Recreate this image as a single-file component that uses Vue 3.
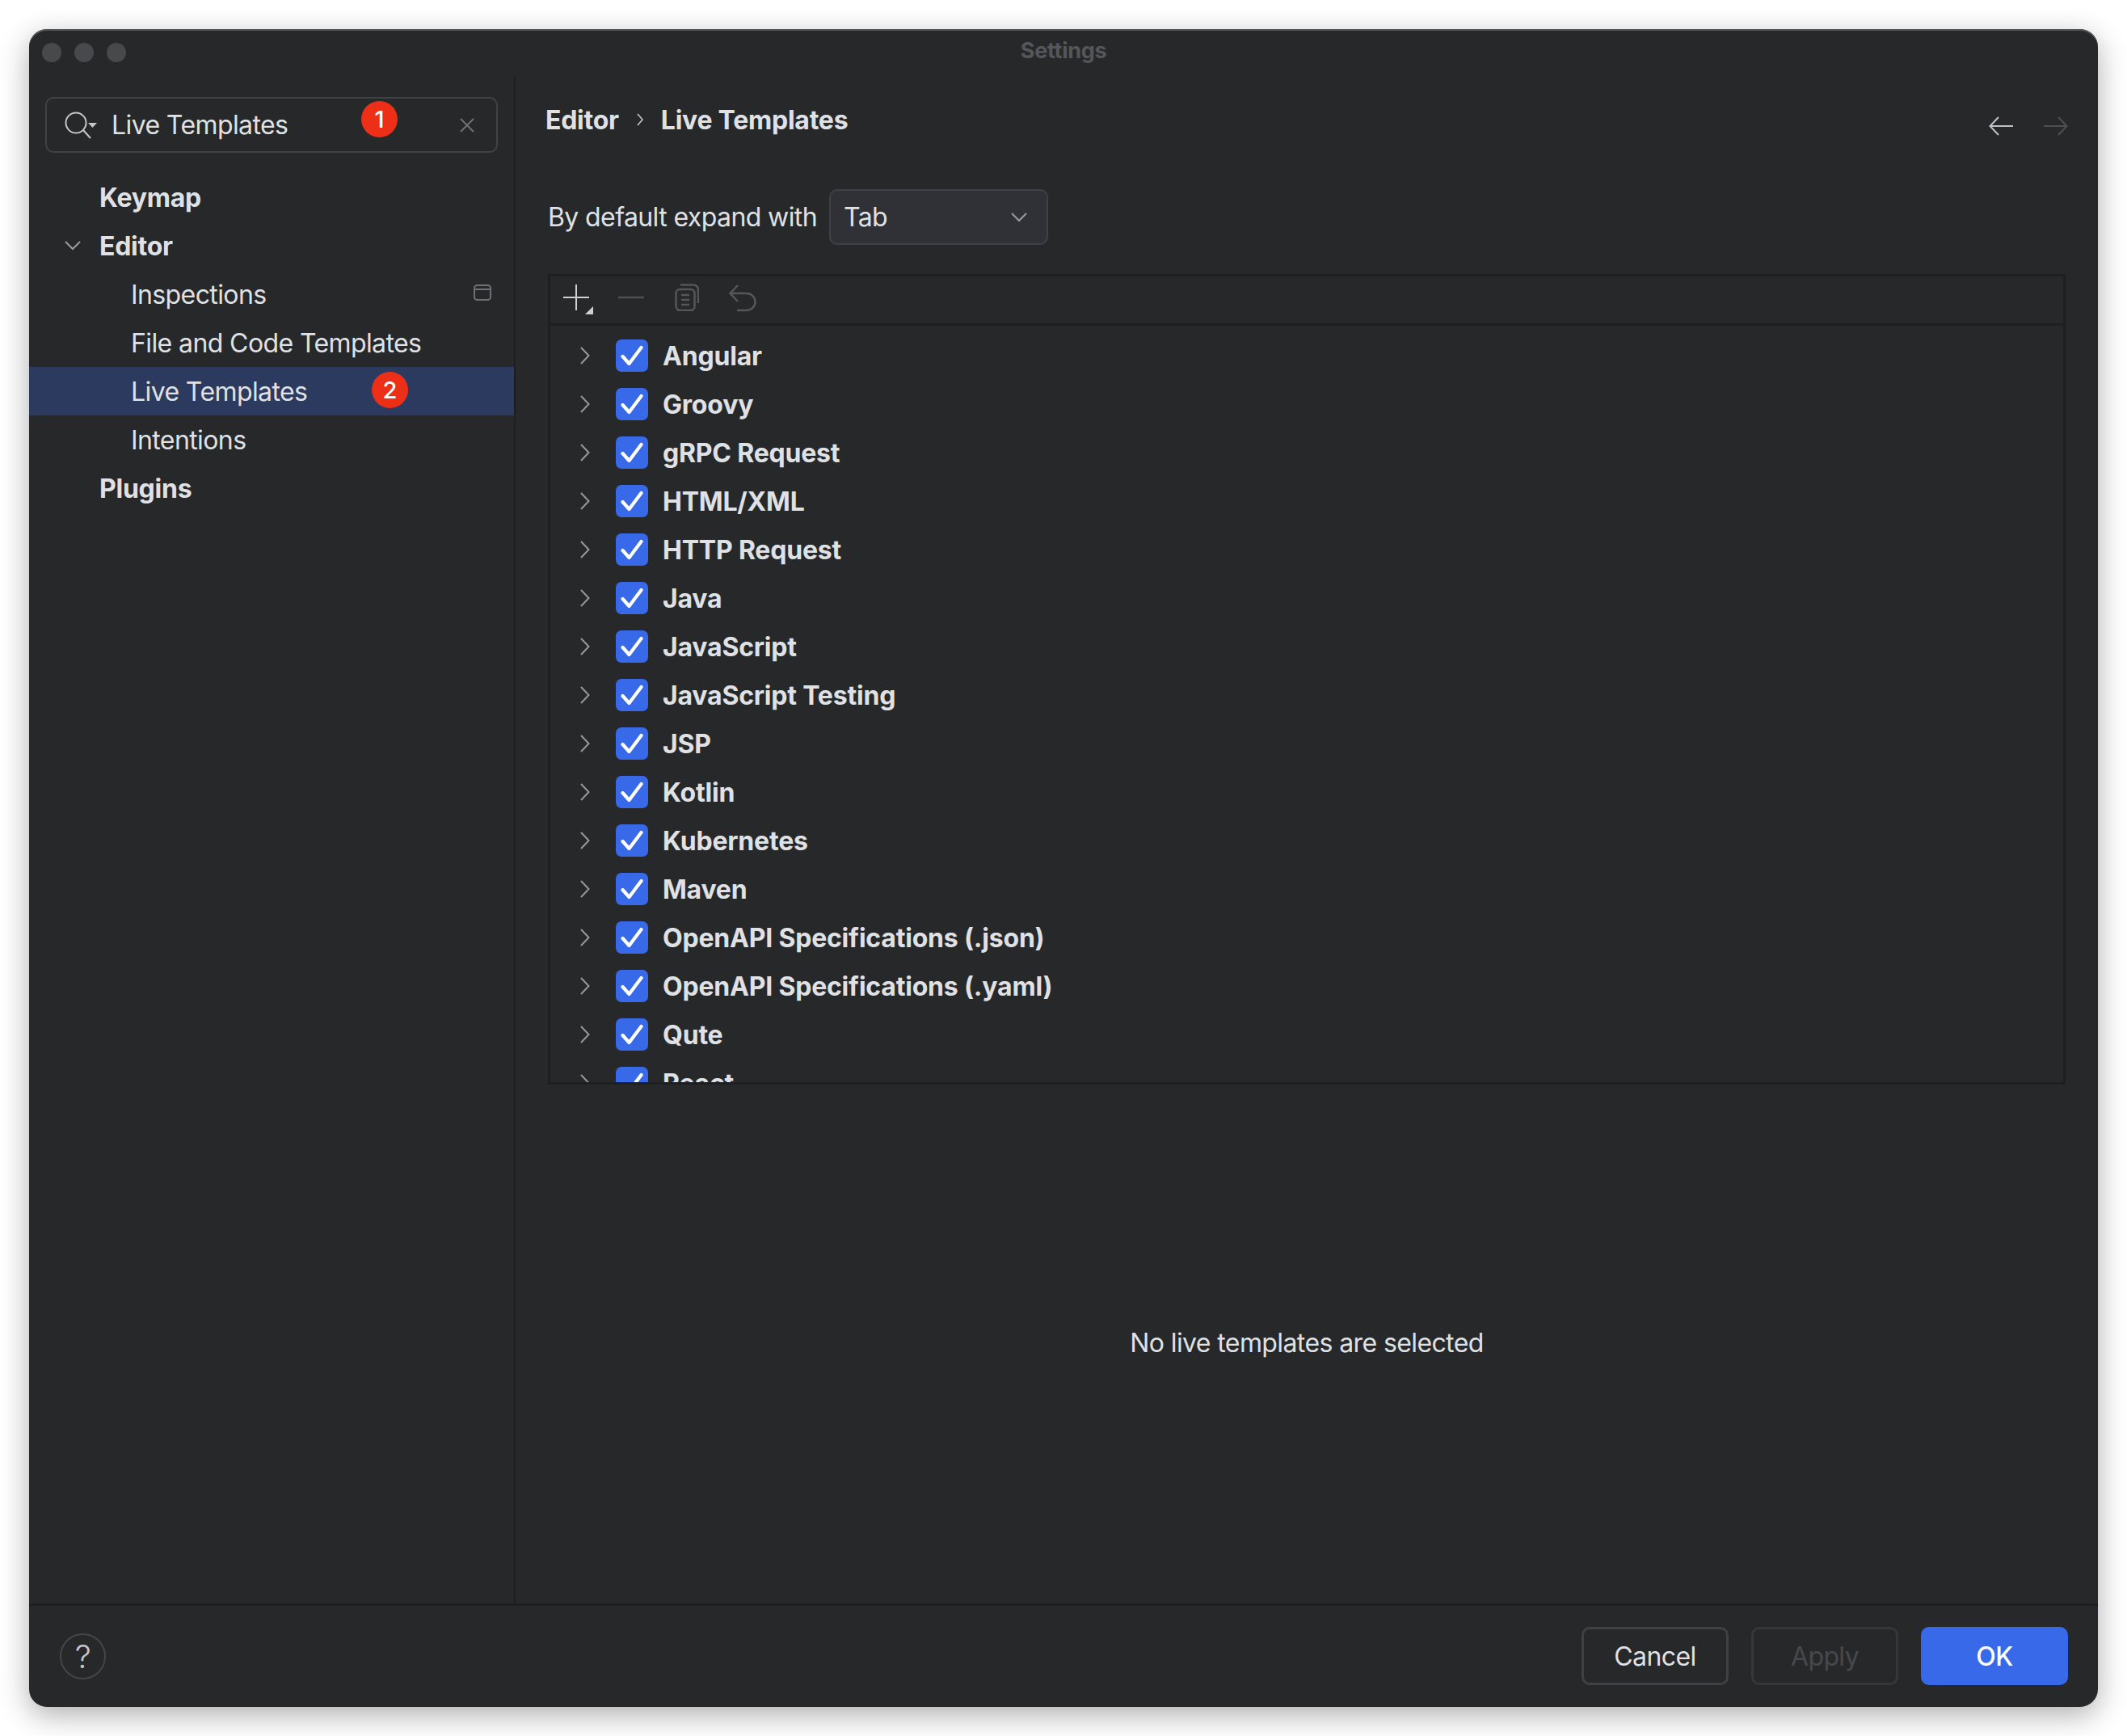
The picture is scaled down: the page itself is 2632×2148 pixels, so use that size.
<script setup>
const tree = [
  { label: 'Keymap', level: 'top' },
  { label: 'Editor', level: 'top', open: true },
  { label: 'Inspections', level: 'sub', stash: true },
  { label: 'File and Code Templates', level: 'sub' },
  { label: 'Live Templates', level: 'sub', selected: true, badge: '2' },
  { label: 'Intentions', level: 'sub' },
  { label: 'Plugins', level: 'top' }
]
const groups = ['Angular', 'Groovy', 'gRPC Request', 'HTML/XML', 'HTTP Request', 'Java', 'JavaScript', 'JavaScript Testing', 'JSP', 'Kotlin', 'Kubernetes', 'Maven', 'OpenAPI Specifications (.json)', 'OpenAPI Specifications (.yaml)', 'Qute', 'React']
</script>

<template>
  <div class="page">
    <div class="window">
      <header class="titlebar">
        <div class="lights"><i></i><i></i><i></i></div>
        <div class="title">Settings</div>
      </header>
      <div class="main">
        <aside class="sidebar">
          <div class="search">
            <svg class="search-icon" width="40" height="34" viewBox="0 0 40 34" fill="none">
              <circle cx="14" cy="14" r="12.500" stroke="#c4c6cc" stroke-width="2"/>
              <path d="M23 23l9 10" stroke="#c4c6cc" stroke-width="2"/>
              <path d="M29 14h11l-5.500 6z" fill="#c4c6cc"/>
            </svg>
            <span class="search-text">Live Templates</span>
            <span class="badge badge-search">1</span>
            <svg class="search-clear" width="18" height="18" viewBox="0 0 18 18" fill="none">
              <path d="M1 1l16 16M17 1L1 17" stroke="#6f7177" stroke-width="2"/>
            </svg>
          </div>
          <nav class="tree">
            <div v-for="n in tree" :key="n.label" class="node" :class="[n.level, { selected: n.selected }]">
              <svg v-if="n.open" class="node-chevron" width="20" height="12" viewBox="0 0 20 12" fill="none">
                <path d="M1 1l9 9 9-9" stroke="#9a9ca2" stroke-width="2"/>
              </svg>
              <span>{{ n.label }}</span>
              <span v-if="n.badge" class="badge badge-tree">{{ n.badge }}</span>
              <svg v-if="n.stash" class="node-stash" width="22" height="20" viewBox="0 0 22 20" fill="none">
                <rect x="1" y="1" width="20" height="18" rx="3.500" stroke="#6f7177" stroke-width="2"/>
                <path d="M1 6h20" stroke="#6f7177" stroke-width="2"/>
              </svg>
            </div>
          </nav>
        </aside>
        <section class="panel">
          <div class="head">
            <div class="crumbs">
              <span>Editor</span>
              <svg width="8" height="16" viewBox="0 0 8 16" fill="none"><path d="M1 1l6 7-6 7" stroke="#c4c6cc" stroke-width="1.600"/></svg>
              <span>Live Templates</span>
            </div>
            <div class="nav">
              <svg width="30" height="24" viewBox="0 0 30 24" fill="none"><path d="M30 12H2M12 1L1.500 12 12 23" stroke="#bfc1c7" stroke-width="2"/></svg>
              <svg width="30" height="24" viewBox="0 0 30 24" fill="none"><path d="M0 12h28M18 1l10.500 11L18 23" stroke="#4e4f53" stroke-width="2"/></svg>
            </div>
          </div>
          <div class="expand">
            <span>By default expand with</span>
            <div class="combo">
              <span>Tab</span>
              <svg width="20" height="12" viewBox="0 0 20 12" fill="none"><path d="M1 1l9 9 9-9" stroke="#9a9ca2" stroke-width="2"/></svg>
            </div>
          </div>
          <div class="table">
            <div class="toolbar">
              <svg width="38" height="38" viewBox="0 0 38 38" fill="none">
                <path d="M16 0v32M0 16h32" stroke="#ced0d6" stroke-width="2"/>
                <path d="M37 27v10H27z" fill="#ced0d6"/>
              </svg>
              <svg width="32" height="32" viewBox="0 0 32 32" fill="none"><path d="M0 16h32" stroke="#4e4f53" stroke-width="2.500"/></svg>
              <svg width="30" height="34" viewBox="0 0 30 34" fill="none">
                <rect x="1.500" y="7" width="23" height="26" rx="5" stroke="#55565a" stroke-width="2.500"/>
                <path d="M7 1.500h16a6 6 0 0 1 6 6V24" stroke="#55565a" stroke-width="2.500"/>
                <path d="M8 14h10M8 20h10M8 26h10" stroke="#55565a" stroke-width="2.500"/>
              </svg>
              <svg width="34" height="34" viewBox="0 0 34 34" fill="none">
                <path d="M11 1L1.500 11l9.500 10M2 11h20a10.500 10.500 0 0 1 0 21H10" stroke="#55565a" stroke-width="2.500"/>
              </svg>
            </div>
            <div class="rows">
              <div v-for="g in groups" :key="g" class="row">
                <svg class="row-chevron" width="12" height="22" viewBox="0 0 12 22" fill="none"><path d="M1 1l9.500 10L1 21" stroke="#96989e" stroke-width="2"/></svg>
                <span class="check">
                  <svg width="28" height="26" viewBox="0 0 28 26" fill="none"><path d="M2.500 14l8 9L25.500 3" stroke="#fff" stroke-width="4.200" stroke-linecap="round" stroke-linejoin="round"/></svg>
                </span>
                <span class="row-label">{{ g }}</span>
              </div>
            </div>
          </div>
          <div class="empty">No live templates are selected</div>
        </section>
      </div>
      <footer class="footer">
        <div class="help">?</div>
        <div class="buttons">
          <div class="btn">Cancel</div>
          <div class="btn disabled">Apply</div>
          <div class="btn primary">OK</div>
        </div>
      </footer>
    </div>
  </div>
</template>

<style scoped>
.page {
  width: 2632px;
  height: 2148px;
  box-sizing: border-box;
  padding: 36px;
  background: #fff;
  font-family: Inter, "Liberation Sans", sans-serif;
  font-size: 32px;
  letter-spacing: -0.6px;
  color: #dfe1e5;
}
.window {
  height: 100%;
  display: flex;
  flex-direction: column;
  background: #27282a;
  border-radius: 22px;
  box-shadow: 0 10px 36px rgba(0, 0, 0, 0.32), inset 0 2px 0 #55565a;
  overflow: hidden;
}
.titlebar {
  height: 58px;
  flex: none;
  display: grid;
  grid-template-columns: 1fr auto 1fr;
  align-items: center;
  padding: 0 16px;
}
.lights { display: flex; gap: 16px; }
.lights i { width: 24px; height: 24px; border-radius: 50%; background: #48494c; }
.title { font-size: 27px; font-weight: 700; letter-spacing: -0.3px; color: #55565a; margin-bottom: 5px; }
.main { flex: 1; display: flex; min-height: 0; }
.sidebar {
  width: 600px;
  flex: none;
  border-right: 2px solid #1e1f22;
}
.search {
  position: relative;
  height: 69px;
  box-sizing: border-box;
  margin: 26px 20px 25px 20px;
  padding-left: 22px;
  display: flex;
  align-items: center;
  border: 2px solid #414247;
  border-radius: 10px;
}
.search-icon { flex: none; margin-right: 18px; }
.search-clear { position: absolute; right: 27px; top: 24px; }
.search-text { line-height: 1; }
.badge {
  position: absolute;
  width: 45px;
  height: 45px;
  border-radius: 50%;
  background: #ee2f17;
  color: #fff;
  font-size: 29px;
  font-weight: 500;
  letter-spacing: 0;
  display: flex;
  align-items: center;
  justify-content: center;
}
.badge-search { left: 389px; top: 3px; }
.badge-tree { left: 424px; top: 6px; }
.node {
  position: relative;
  height: 60px;
  display: flex;
  align-items: center;
}
.node.top { padding-left: 87px; font-weight: 700; letter-spacing: -0.25px; }
.node.sub { padding-left: 126px; }
.node.selected { background: #2b3a5e; }
.node-chevron { position: absolute; left: 44px; top: 24px; }
.node-stash { position: absolute; left: 550px; top: 18px; }
.panel {
  flex: 1;
  min-width: 0;
  display: flex;
  flex-direction: column;
  padding: 0 40px;
}
.head {
  height: 140px;
  flex: none;
  display: flex;
  justify-content: space-between;
  box-sizing: border-box;
  padding-top: 24px;
  margin-left: -3px;
}
.crumbs { display: flex; align-items: center; gap: 22px; height: 60px; font-weight: 700; letter-spacing: -0.25px; align-self: flex-start; }
.nav { display: flex; gap: 38px; height: 24px; margin-top: 26px; margin-right: -3px; }
.expand {
  height: 69px;
  flex: none;
  display: flex;
  align-items: center;
  gap: 15px;
}
.combo {
  width: 271px;
  height: 69px;
  box-sizing: border-box;
  padding: 0 24px 0 16px;
  display: flex;
  align-items: center;
  justify-content: space-between;
  background: #303136;
  border: 2px solid #3f4146;
  border-radius: 10px;
}
.table {
  height: 1003px;
  flex: none;
  margin-top: 36px;
  display: flex;
  flex-direction: column;
  border: 3px solid #1e1f22;
  box-sizing: border-box;
  overflow: hidden;
}
.toolbar {
  height: 61px;
  flex: none;
  box-sizing: border-box;
  border-bottom: 3px solid #1e1f22;
  display: flex;
  align-items: flex-start;
  padding: 10px 0 0 16px;
  gap: 30px;
}
.toolbar svg:nth-child(3) { margin-left: 8px; margin-top: -1px; }
.toolbar svg:nth-child(4) { margin-left: 7px; }
.rows { padding-top: 7px; overflow: hidden; flex: 1; min-height: 0; }
.row {
  height: 60px;
  display: flex;
  align-items: center;
  padding-left: 37px;
  font-weight: 700;
  letter-spacing: -0.2px;
}
.row-chevron { flex: none; margin-right: 32px; }
.check {
  width: 40px;
  height: 40px;
  flex: none;
  border-radius: 7px;
  background: #3769e8;
  display: flex;
  align-items: center;
  justify-content: center;
  margin-right: 18px;
}
.empty { flex: 1; display: flex; align-items: center; justify-content: center; padding-bottom: 4px; }
.footer {
  height: 128px;
  flex: none;
  box-sizing: border-box;
  border-top: 3px solid #1e1f22;
  display: flex;
  align-items: center;
  justify-content: space-between;
  padding: 0 37px 1px 38px;
}
.help {
  width: 57px;
  height: 57px;
  box-sizing: border-box;
  border: 2px solid #45464b;
  border-radius: 50%;
  display: flex;
  align-items: center;
  justify-content: center;
  font-size: 40px;
  font-weight: 300;
  color: #c4c6cc;
}
.buttons { display: flex; gap: 28px; }
.btn {
  width: 182px;
  height: 72px;
  box-sizing: border-box;
  border: 3px solid #3f4146;
  border-radius: 10px;
  display: flex;
  align-items: center;
  justify-content: center;
}
.btn.disabled { color: #47484d; border-color: #36373b; }
.btn.primary { background: #3769e8; border-color: #3769e8; color: #fff; font-weight: 500; }
</style>
